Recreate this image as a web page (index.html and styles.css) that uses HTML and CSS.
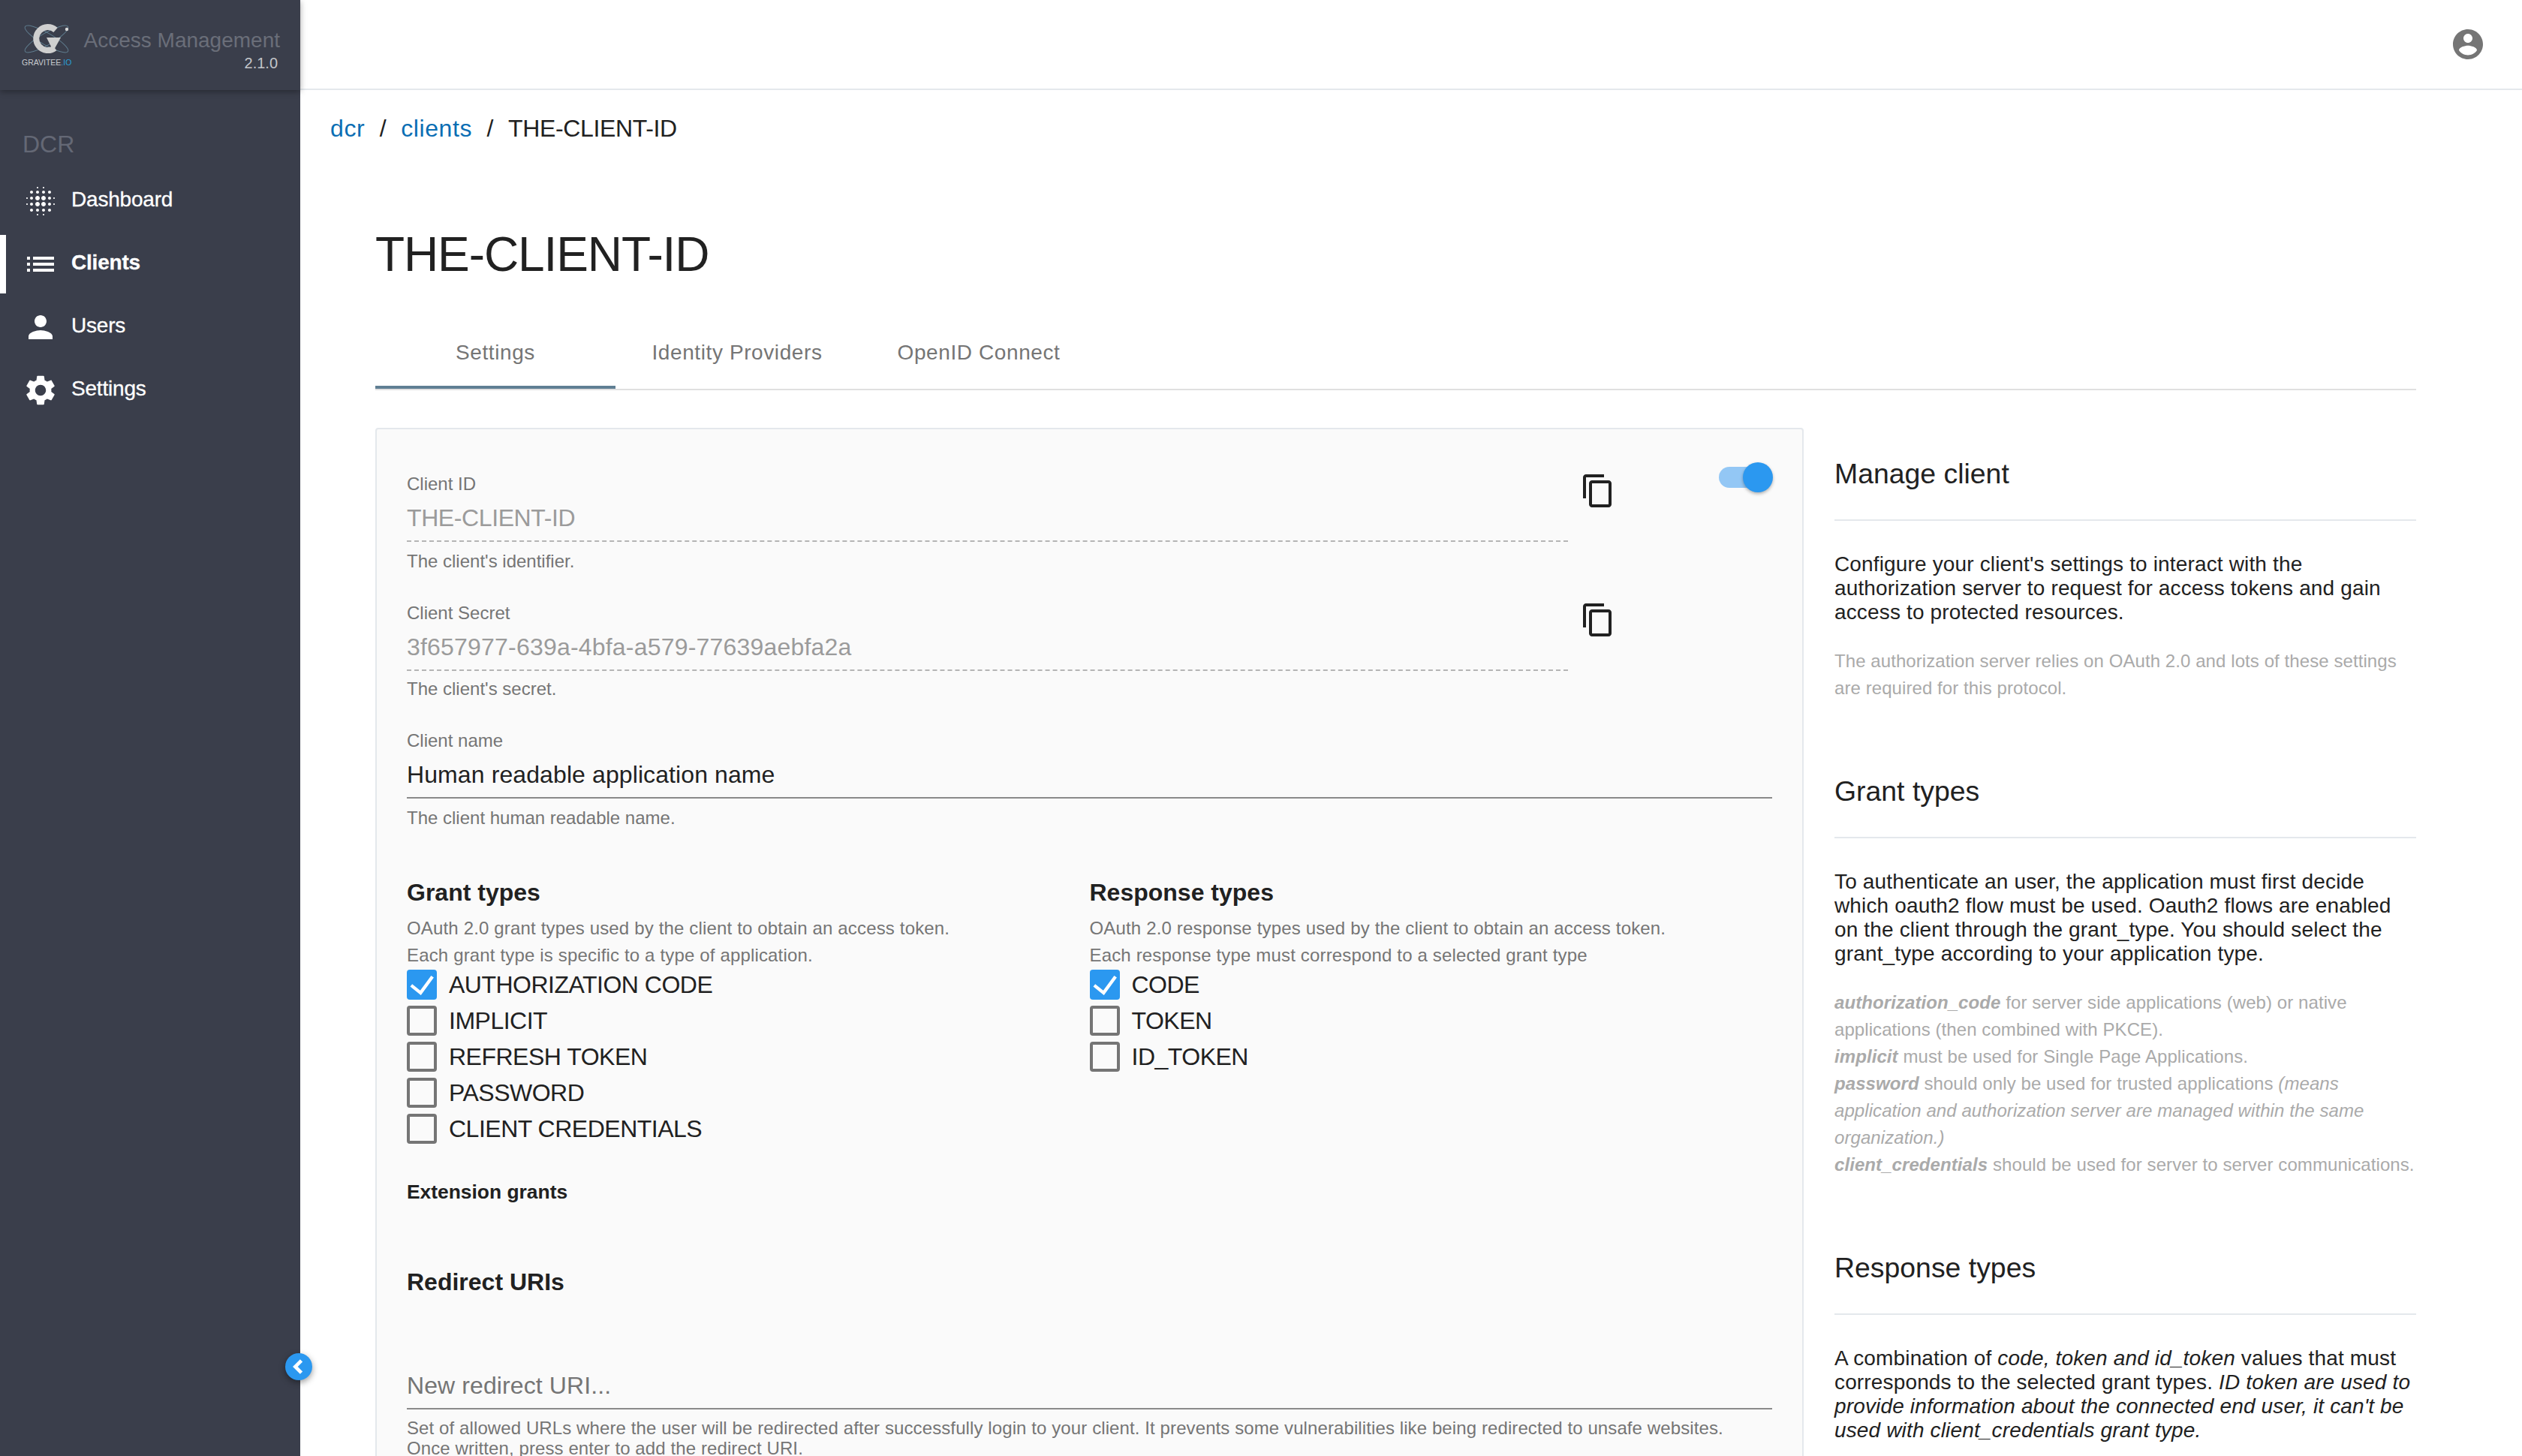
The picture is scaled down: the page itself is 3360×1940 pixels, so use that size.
FILE: index.html
```html
<!DOCTYPE html>
<html lang="en">

<head>
  <meta charset="UTF-8">
  <title>Access Management</title>
  <link rel="stylesheet" href="styles.css">
</head>

<body>
  <div class="page">
    <aside class="sidebar">
      <div class="brand">
        <div class="logo">
          <svg class="logo-mark" viewBox="0 0 66 50" width="66" height="50">
            <g fill="none" stroke="#5f7c8e" stroke-width="1">
              <ellipse cx="33" cy="22" rx="33" ry="8" transform="rotate(30 33 22)" />
              <ellipse cx="33" cy="22" rx="33" ry="8" transform="rotate(-30 33 22)" />
            </g>
            <path d="M45 10 A 15.5 15.5 0 1 0 44 34" fill="none" stroke="#cfcfcf" stroke-width="8" />
            <path d="M33 20 H52 L42 38 Z" fill="#cfcfcf" />
            <circle cx="60" cy="9" r="2.2" fill="#d8d8d8" />
          </svg>
          <span class="logo-text">GRAVITEE<span class="logo-io">.IO</span></span>
        </div>
        <div class="product">
          <span class="product-name">Access Management</span>
          <span class="product-version">2.1.0</span>
        </div>
      </div>

      <div class="domain">DCR</div>

      <nav class="menu">
        <a class="menu-item">
          <svg class="menu-icon" viewBox="0 0 24 24"><path d="M6 13c-.55 0-1 .45-1 1s.45 1 1 1 1-.45 1-1-.45-1-1-1zm0 4c-.55 0-1 .45-1 1s.45 1 1 1 1-.45 1-1-.45-1-1-1zm0-8c-.55 0-1 .45-1 1s.45 1 1 1 1-.45 1-1-.45-1-1-1zm-3 .5c-.28 0-.5.22-.5.5s.22.5.5.5.5-.22.5-.5-.22-.5-.5-.5zM6 5c-.55 0-1 .45-1 1s.45 1 1 1 1-.45 1-1-.45-1-1-1zm15 5.5c.28 0 .5-.22.5-.5s-.22-.5-.5-.5-.5.22-.5.5.22.5.5.5zM14 7c.55 0 1-.45 1-1s-.45-1-1-1-1 .45-1 1 .45 1 1 1zm0-3.5c.28 0 .5-.22.5-.5s-.22-.5-.5-.5-.5.22-.5.5.22.5.5.5zm-11 10c-.28 0-.5.22-.5.5s.22.5.5.5.5-.22.5-.5-.22-.5-.5-.5zm7 7c-.28 0-.5.22-.5.5s.22.5.5.5.5-.22.5-.5-.22-.5-.5-.5zm0-17c.28 0 .5-.22.5-.5s-.22-.5-.5-.5-.5.22-.5.5.22.5.5.5zM10 7c.55 0 1-.45 1-1s-.45-1-1-1-1 .45-1 1 .45 1 1 1zm0 5.5c-.83 0-1.5.67-1.5 1.5s.67 1.5 1.5 1.5 1.5-.67 1.5-1.5-.67-1.5-1.5-1.5zm8 .5c-.55 0-1 .45-1 1s.45 1 1 1 1-.45 1-1-.45-1-1-1zm0 4c-.55 0-1 .45-1 1s.45 1 1 1 1-.45 1-1-.45-1-1-1zm0-8c-.55 0-1 .45-1 1s.45 1 1 1 1-.45 1-1-.45-1-1-1zm0-4c-.55 0-1 .45-1 1s.45 1 1 1 1-.45 1-1-.45-1-1-1zm3 8.5c-.28 0-.5.22-.5.5s.22.5.5.5.5-.22.5-.5-.22-.5-.5-.5zM14 17c-.55 0-1 .45-1 1s.45 1 1 1 1-.45 1-1-.45-1-1-1zm0 3.5c-.28 0-.5.22-.5.5s.22.5.5.5.5-.22.5-.5-.22-.5-.5-.5zm-4-12c-.83 0-1.5.67-1.5 1.5s.67 1.5 1.5 1.5 1.5-.67 1.5-1.5-.67-1.5-1.5-1.5zm0 8.5c-.55 0-1 .45-1 1s.45 1 1 1 1-.45 1-1-.45-1-1-1zm4-4.5c-.83 0-1.5.67-1.5 1.5s.67 1.5 1.5 1.5 1.5-.67 1.5-1.5-.67-1.5-1.5-1.5zm0-4c-.83 0-1.5.67-1.5 1.5s.67 1.5 1.5 1.5 1.5-.67 1.5-1.5-.67-1.5-1.5-1.5z" /></svg>
          <span>Dashboard</span>
        </a>
        <a class="menu-item active">
          <svg class="menu-icon" viewBox="0 0 24 24"><path d="M3 13h2v-2H3v2zm0 4h2v-2H3v2zm0-8h2V7H3v2zm4 4h14v-2H7v2zm0 4h14v-2H7v2zm0-10v2h14V7H7z" /></svg>
          <span>Clients</span>
        </a>
        <a class="menu-item">
          <svg class="menu-icon" viewBox="0 0 24 24"><path d="M12 12c2.21 0 4-1.79 4-4s-1.79-4-4-4-4 1.79-4 4 1.79 4 4 4zm0 2c-2.67 0-8 1.34-8 4v2h16v-2c0-2.66-5.33-4-8-4z" /></svg>
          <span>Users</span>
        </a>
        <a class="menu-item">
          <svg class="menu-icon" viewBox="0 0 24 24"><path d="M19.14 12.94c.04-.3.06-.61.06-.94 0-.32-.02-.64-.07-.94l2.03-1.58c.18-.14.23-.41.12-.61l-1.92-3.32c-.12-.22-.37-.29-.59-.22l-2.39.96c-.5-.38-1.03-.7-1.62-.94l-.36-2.54c-.04-.24-.24-.41-.48-.41h-3.84c-.24 0-.43.17-.47.41l-.36 2.54c-.59.24-1.13.57-1.62.94l-2.39-.96c-.22-.08-.47 0-.59.22L2.74 8.87c-.12.21-.08.47.12.61l2.03 1.58c-.05.3-.09.63-.09.94s.02.64.07.94l-2.03 1.58c-.18.14-.23.41-.12.61l1.92 3.32c.12.22.37.29.59.22l2.39-.96c.5.38 1.03.7 1.62.94l.36 2.54c.05.24.24.41.48.41h3.84c.24 0 .44-.17.47-.41l.36-2.54c.59-.24 1.13-.56 1.62-.94l2.39.96c.22.08.47 0 .59-.22l1.92-3.32c.12-.22.07-.47-.12-.61l-2.01-1.58zM12 15.6c-1.98 0-3.6-1.62-3.6-3.6s1.62-3.6 3.6-3.6 3.6 1.62 3.6 3.6-1.62 3.6-3.6 3.6z" /></svg>
          <span>Settings</span>
        </a>
      </nav>

      <button class="collapse">
        <svg viewBox="0 0 24 24" width="28" height="28"><path d="M15 5 L8 12 L15 19" fill="none" stroke="#fff" stroke-width="4" /></svg>
      </button>
    </aside>

    <div class="content">
      <header class="topbar">
        <svg class="account" viewBox="0 0 24 24"><path d="M12 2C6.48 2 2 6.48 2 12s4.48 10 10 10 10-4.48 10-10S17.52 2 12 2zm0 3c1.66 0 3 1.34 3 3s-1.34 3-3 3-3-1.34-3-3 1.34-3 3-3zm0 14.2c-2.5 0-4.71-1.28-6-3.22.03-1.99 4-3.08 6-3.08 1.99 0 5.97 1.09 6 3.08-1.29 1.94-3.5 3.22-6 3.22z" /></svg>
      </header>

      <div class="breadcrumb">
        <a>dcr</a><span class="sep">/</span><a>clients</a><span class="sep">/</span><span class="crumb-current">THE-CLIENT-ID</span>
      </div>

      <main class="client">
        <h1 class="title">THE-CLIENT-ID</h1>

        <div class="tabs">
          <div class="tab active">Settings</div>
          <div class="tab">Identity Providers</div>
          <div class="tab">OpenID Connect</div>
        </div>

        <div class="columns">
          <form class="card">
            <div class="row">
              <div class="field field-short">
                <label class="field-label">Client ID</label>
                <div class="field-value readonly client-id">THE-CLIENT-ID</div>
                <div class="hint">The client's identifier.</div>
              </div>
              <svg class="copy" viewBox="0 0 24 24"><path d="M16 1H4c-1.1 0-2 .9-2 2v14h2V3h12V1zm3 4H8c-1.1 0-2 .9-2 2v14c0 1.1.9 2 2 2h11c1.1 0 2-.9 2-2V7c0-1.1-.9-2-2-2zm0 16H8V7h11v14z" /></svg>
              <div class="toggle"><span class="toggle-thumb"></span></div>
            </div>

            <div class="row">
              <div class="field field-short">
                <label class="field-label">Client Secret</label>
                <div class="field-value readonly client-secret">3f657977-639a-4bfa-a579-77639aebfa2a</div>
                <div class="hint">The client's secret.</div>
              </div>
              <svg class="copy" viewBox="0 0 24 24"><path d="M16 1H4c-1.1 0-2 .9-2 2v14h2V3h12V1zm3 4H8c-1.1 0-2 .9-2 2v14c0 1.1.9 2 2 2h11c1.1 0 2-.9 2-2V7c0-1.1-.9-2-2-2zm0 16H8V7h11v14z" /></svg>
            </div>

            <div class="field">
              <label class="field-label">Client name</label>
              <div class="field-value">Human readable application name</div>
              <div class="hint">The client human readable name.</div>
            </div>

            <div class="types">
              <div class="type-col">
                <h3 class="group-title">Grant types</h3>
                <p class="group-desc">OAuth 2.0 grant types used by the client to obtain an access token.<br>Each grant type is specific to a type of application.</p>
                <label class="check"><span class="box checked"><svg viewBox="0 0 24 24"><path d="M3.5 12.5 L11 18.5 L20.5 5.5" fill="none" stroke="#fff" stroke-width="2.6" /></svg></span>AUTHORIZATION CODE</label>
                <label class="check"><span class="box"></span>IMPLICIT</label>
                <label class="check"><span class="box"></span>REFRESH TOKEN</label>
                <label class="check"><span class="box"></span>PASSWORD</label>
                <label class="check"><span class="box"></span>CLIENT CREDENTIALS</label>
              </div>
              <div class="type-col">
                <h3 class="group-title">Response types</h3>
                <p class="group-desc">OAuth 2.0 response types used by the client to obtain an access token.<br>Each response type must correspond to a selected grant type</p>
                <label class="check"><span class="box checked"><svg viewBox="0 0 24 24"><path d="M3.5 12.5 L11 18.5 L20.5 5.5" fill="none" stroke="#fff" stroke-width="2.6" /></svg></span>CODE</label>
                <label class="check"><span class="box"></span>TOKEN</label>
                <label class="check"><span class="box"></span>ID_TOKEN</label>
              </div>
            </div>

            <h4 class="extension">Extension grants</h4>
            <h3 class="group-title redirect-title">Redirect URIs</h3>

            <div class="field-value placeholder">New redirect URI...</div>
            <div class="hint redirect-hint">Set of allowed URLs where the user will be redirected after successfully login to your client. It prevents some vulnerabilities like being redirected to unsafe websites.<br>Once written, press enter to add the redirect URI.</div>
          </form>

          <section class="help">
            <div class="help-block">
              <h2 class="help-title">Manage client</h2>
              <p class="help-text">Configure your client's settings to interact with the authorization server to request for access tokens and gain access to protected resources.</p>
              <p class="help-note">The authorization server relies on OAuth 2.0 and lots of these settings are required for this protocol.</p>
            </div>
            <div class="help-block">
              <h2 class="help-title">Grant types</h2>
              <p class="help-text">To authenticate an user, the application must first decide which oauth2 flow must be used. Oauth2 flows are enabled on the client through the grant_type. You should select the grant_type according to your application type.</p>
              <p class="help-note"><b><i>authorization_code</i></b> for server side applications (web) or native<br>
                applications (then combined with PKCE).<br>
                <b><i>implicit</i></b> must be used for Single Page Applications.<br>
                <b><i>password</i></b> should only be used for trusted applications <i>(means</i><br>
                <i>application and authorization server are managed within the same</i><br>
                <i>organization.)</i><br>
                <b><i>client_credentials</i></b> should be used for server to server communications.</p>
            </div>
            <div class="help-block">
              <h2 class="help-title">Response types</h2>
              <p class="help-text">A combination of <i>code, token and id_token</i> values that must<br>
                corresponds to the selected grant types. <i>ID token are used to</i><br>
                <i>provide information about the connected end user, it can't be</i><br>
                <i>used with client_credentials grant type.</i></p>
            </div>
          </section>
        </div>
      </main>
    </div>
  </div>
</body>

</html>
```

FILE: styles.css
```css
* {
  box-sizing: border-box;
}

html,
body {
  height: 1940px;
  margin: 0;
  overflow: hidden;
}

body {
  background: #fff;
  color: #212121;
  font-family: "Liberation Sans", Arial, sans-serif;
}

h1,
h2,
h3,
h4,
p {
  margin: 0;
}

.page {
  display: flex;
  height: 1940px;
}

/* sidebar */
.sidebar {
  background: #3a3e4b;
  color: #fff;
  flex: 0 0 400px;
  position: relative;
}

.brand {
  align-items: flex-start;
  box-shadow: 0 2px 8px rgba(0, 0, 0, .35);
  display: flex;
  height: 120px;
  padding: 30px 27px 0 29px;
}

.logo {
  display: flex;
  flex-direction: column;
  width: 81px;
}

.logo-mark {
  display: block;
}

.logo-text {
  color: #c9ccd0;
  font-size: 10.5px;
  line-height: 14px;
  margin-top: -4px;
}

.logo-io {
  color: #2a9fd8;
}

.product {
  display: flex;
  flex: 1;
  flex-direction: column;
  text-align: right;
}

.product-name {
  color: #6a6e79;
  font-size: 28px;
  line-height: 48px;
}

.product-version {
  color: #c4c6ca;
  font-size: 20px;
  line-height: 22px;
  margin-top: -5px;
  padding-right: 3px;
}

.domain {
  color: #646875;
  font-size: 32px;
  line-height: 40px;
  margin: 52px 0 0 30px;
}

.menu {
  display: flex;
  flex-direction: column;
  gap: 6px;
  margin-top: 17px;
}

.menu-item {
  align-items: center;
  border-left: 8px solid transparent;
  display: flex;
  font-size: 28px;
  gap: 17px;
  height: 78px;
  letter-spacing: -.2px;
  padding-left: 22px;
  -webkit-text-stroke: .3px #fff;
}

.menu-item span {
  padding-bottom: 4px;
}

.menu-item.active {
  border-left-color: #fff;
  font-weight: 700;
}

.menu-icon {
  fill: #fff;
  height: 48px;
  width: 48px;
}

.collapse {
  align-items: center;
  background: #2b98f0;
  border: 0;
  border-radius: 50%;
  box-shadow: 0 3px 8px rgba(0, 0, 0, .4);
  display: flex;
  height: 36px;
  justify-content: center;
  left: 380px;
  padding: 0;
  position: absolute;
  top: 1803px;
  width: 36px;
}

/* top */
.content {
  flex: 1;
  min-width: 0;
}

.topbar {
  align-items: center;
  border-bottom: 2px solid #e4e8ec;
  display: flex;
  height: 120px;
  justify-content: flex-end;
  padding-right: 48px;
}

.account {
  fill: #757575;
  height: 48px;
  width: 48px;
}

.breadcrumb {
  font-size: 32px;
  line-height: 40px;
  padding: 31px 0 0 40px;
}

.breadcrumb a {
  color: #0a6eb4;
  letter-spacing: .6px;
}

.crumb-current {
  letter-spacing: -.35px;
}

.sep {
  margin: 0 19.5px;
}

.client {
  padding: 0 141px 0 100px;
}

.title {
  font-size: 64px;
  font-weight: 400;
  letter-spacing: -1.1px;
  line-height: 80px;
  margin-top: 108px;
}

.tabs {
  border-bottom: 2px solid #e0e0e0;
  display: flex;
  height: 141px;
}

.tab {
  align-items: center;
  color: #757575;
  display: flex;
  font-size: 28px;
  justify-content: center;
  letter-spacing: .6px;
  padding-top: 42px;
  width: 320px;
}

.tab + .tab {
  margin-left: 2px;
}

.tab.active {
  border-bottom: 4px solid #5f7f93;
  padding-top: 46px;
}

.columns {
  display: flex;
  gap: 41px;
  margin-top: 50px;
}

/* form card */
.card {
  background: #fafafa;
  border: 2px solid #e4e8ec;
  border-radius: 4px;
  flex: 0 0 1903px;
  height: 1400px;
  padding: 59px 40px 0;
}

.row {
  display: flex;
}

.row + .row .hint {
  margin-top: 10px;
}

.field-short {
  width: 1547px;
}

.field {
  margin-bottom: 41px;
}

.field-label {
  color: #757575;
  display: block;
  font-size: 24px;
  line-height: 28px;
}

.field-value {
  border-bottom: 2px solid #8a8a8a;
  font-size: 32px;
  letter-spacing: .1px;
  line-height: 40px;
  margin-top: 11px;
  padding-bottom: 10px;
}

.field-value.readonly {
  border-bottom: 2px dashed #b5b5b5;
  color: #9b9b9b;
}

.client-id {
  letter-spacing: -.4px;
}

.client-secret {
  letter-spacing: .2px;
}

.field-value.placeholder {
  color: #757575;
  margin-top: 98px;
}

.hint {
  color: #757575;
  font-size: 24px;
  line-height: 28px;
  margin-top: 12px;
}

.copy {
  fill: #212121;
  height: 48px;
  margin: -1px 0 0 16px;
  width: 48px;
}

.toggle {
  background: #93c7f5;
  border-radius: 14px;
  height: 28px;
  margin: -9px 0 0 137px;
  position: relative;
  width: 68px;
}

.toggle-thumb {
  background: #2b98f0;
  border-radius: 50%;
  box-shadow: 0 2px 4px rgba(0, 0, 0, .3);
  height: 40px;
  position: absolute;
  right: -4px;
  top: -6px;
  width: 40px;
}

.types {
  display: flex;
  margin-top: 65px;
}

.type-col {
  flex: 0 0 50%;
}

.group-title {
  font-size: 32px;
  font-weight: 700;
  line-height: 40px;
}

.group-desc {
  color: #757575;
  font-size: 24px;
  letter-spacing: .16px;
  line-height: 36px;
  margin: 10px 0 -3px;
}

.check {
  align-items: center;
  display: flex;
  font-size: 32px;
  gap: 16px;
  height: 48px;
  letter-spacing: -.5px;
}

.box {
  border: 4px solid #757575;
  border-radius: 4px;
  display: block;
  height: 40px;
  width: 40px;
}

.box.checked {
  background: #2b98f0;
  border: 0;
}

.box svg {
  display: block;
  height: 40px;
  width: 40px;
}

.extension {
  font-size: 26.4px;
  font-weight: 700;
  line-height: 36px;
  margin-top: 42px;
}

.redirect-title {
  margin-top: 82px;
}

.redirect-hint {
  letter-spacing: .1px;
  line-height: 27px;
  margin-top: 11px;
}

/* help column */
.help {
  flex: 1;
  padding-top: 39px;
}

.help-block {
  margin-bottom: 97px;
}

.help-title {
  border-bottom: 2px solid #e4e8ec;
  font-size: 37.4px;
  font-weight: 400;
  line-height: 44px;
  padding-bottom: 39px;
}

.help-text {
  font-size: 28px;
  letter-spacing: .15px;
  line-height: 32px;
  margin-top: 42px;
}

.help-note {
  color: #aaa;
  font-size: 24px;
  letter-spacing: .08px;
  line-height: 36px;
  margin-top: 31px;
}
```
